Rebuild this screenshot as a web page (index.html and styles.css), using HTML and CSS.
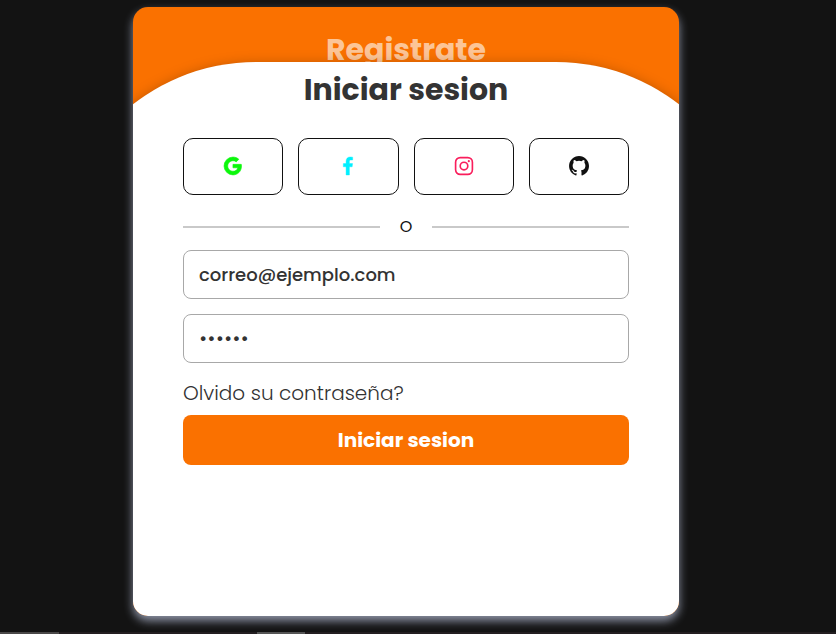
FILE: index.html
```html
<!DOCTYPE html>
<html lang="es">
<head>
<meta charset="utf-8">
<meta name="viewport" content="width=device-width, initial-scale=1">
<title>Iniciar sesion</title>
<link rel="stylesheet" href="styles.css">
</head>
<body>
<main class="card">
  <h2 class="signup-title">Registrate</h2>
  <section class="login">
    <form class="login-form">
      <h1 class="title">Iniciar sesion</h1>
      <div class="socials">
        <button type="button" class="social google" aria-label="Google">
          <svg width="24" height="24" viewBox="0 0 24 24" fill="currentColor"><path d="M20.283 10.356h-8.327v3.451h4.792c-.446 2.193-2.313 3.453-4.792 3.453a5.27 5.27 0 0 1-5.279-5.28 5.27 5.27 0 0 1 5.279-5.279c1.259 0 2.397.447 3.29 1.178l2.6-2.599c-1.584-1.381-3.615-2.233-5.89-2.233a8.908 8.908 0 0 0-8.934 8.934 8.907 8.907 0 0 0 8.934 8.934c4.467 0 8.529-3.249 8.529-8.934 0-.528-.081-1.097-.202-1.625z" stroke="currentColor" stroke-width=".6"/></svg>
        </button>
        <button type="button" class="social facebook" aria-label="Facebook">
          <svg width="24" height="24" viewBox="0 0 24 24" fill="currentColor"><path d="M13.397 20.997v-8.196h2.765l.411-3.209h-3.176V7.548c0-.926.258-1.56 1.587-1.56h1.684V3.127A22.336 22.336 0 0 0 14.201 3c-2.444 0-4.122 1.492-4.122 4.231v2.355H7.332v3.209h2.753v8.202h3.312z" stroke="currentColor" stroke-width=".4"/></svg>
        </button>
        <button type="button" class="social instagram" aria-label="Instagram">
          <svg width="24" height="24" viewBox="0 0 24 24" fill="none" stroke="currentColor" stroke-width="1.65"><rect x="3.6" y="3.6" width="16.8" height="16.8" rx="4.6"/><circle cx="12" cy="12" r="3.8"/><circle cx="16.8" cy="7.2" r="1.08" fill="currentColor" stroke="none"/></svg>
        </button>
        <button type="button" class="social github" aria-label="GitHub">
          <svg width="24" height="24" viewBox="0 0 24 24" fill="currentColor"><path fill-rule="evenodd" d="M12.026 2c-5.509 0-9.974 4.465-9.974 9.974 0 4.406 2.857 8.145 6.821 9.465.499.09.679-.217.679-.481 0-.237-.008-.865-.011-1.696-2.775.602-3.361-1.338-3.361-1.338-.452-1.152-1.107-1.459-1.107-1.459-.905-.619.069-.605.069-.605 1.002.07 1.527 1.028 1.527 1.028.89 1.524 2.336 1.084 2.902.829.091-.645.351-1.085.635-1.334-2.214-.251-4.542-1.107-4.542-4.93 0-1.087.389-1.979 1.024-2.675-.101-.253-.446-1.268.099-2.64 0 0 .837-.269 2.742 1.021a9.582 9.582 0 0 1 2.496-.336 9.554 9.554 0 0 1 2.496.336c1.906-1.291 2.742-1.021 2.742-1.021.545 1.372.203 2.387.099 2.64.64.696 1.024 1.587 1.024 2.675 0 3.833-2.33 4.675-4.552 4.922.355.308.675.916.675 1.846 0 1.334-.012 2.41-.012 2.737 0 .267.178.577.687.479C19.146 20.115 22 16.379 22 11.974 22 6.465 17.535 2 12.026 2z"/></svg>
        </button>
      </div>
      <div class="divider">O</div>
      <input class="field" type="email" aria-label="Correo" value="correo@ejemplo.com">
      <input class="field" type="password" aria-label="Contraseña" value="secret">
      <a class="forgot" href="#">Olvido su contraseña?</a>
      <button class="submit" type="button">Iniciar sesion</button>
    </form>
  </section>
</main>
</body>
</html>
```
FILE: styles.css
```css
* {
  box-sizing: border-box;
}

body {
  margin: 0;
  min-height: 100vh;
  padding: 7px 24px 18px 0;
  display: flex;
  justify-content: center;
  font-family: Poppins, Inter, sans-serif;
  color: #333;
  background:
    linear-gradient(90deg, #4a4848 59px, #231e20 59px 257px, #555 257px 305px, #231e20 305px) bottom / 100% 2px no-repeat,
    #131313;
}

.card {
  width: 100%;
  max-width: 546px;
  display: flex;
  flex-direction: column;
  overflow: hidden;
  border-radius: 15px;
  background: #fa7100;
  box-shadow: 0 5px 10px #8d93a5;
}

.signup-title {
  height: 55px;
  margin: 0;
  padding-top: 23px;
  font-size: 30px;
  line-height: 40px;
  font-weight: 700;
  text-align: center;
  color: rgba(255, 255, 255, 0.6);
}

.login {
  position: relative;
  flex: 1;
  margin: 0 -77px;
  padding: 8px 127px 0;
  border-radius: 200px 200px 0 0;
  background: #fff;
  box-shadow: 0 5px 15px rgba(0, 0, 0, 0.4);
}

.login-form {
  display: flex;
  flex-direction: column;
}

.title {
  margin: 0 0 28px;
  font-size: 30px;
  line-height: 40px;
  font-weight: 700;
  text-align: center;
}

.socials {
  display: grid;
  grid-template-columns: repeat(4, 1fr);
  gap: 15px;
}

.social {
  height: 57px;
  padding: 0 0 2px;
  display: flex;
  align-items: center;
  justify-content: center;
  border: 1px solid #111;
  border-radius: 10px;
  background: #fff;
}

.social svg {
  width: 24px;
  height: 24px;
}

.google { color: #0bf70b; }
.facebook { color: #00f0ff; }
.instagram { color: #f91e5c; }
.github { color: #111; }

.divider {
  margin: 20px 0 11px;
  display: flex;
  align-items: center;
  gap: 20px;
  font-size: 16px;
  line-height: 24px;
  color: #111;
}

.divider::before,
.divider::after {
  content: "";
  flex: 1;
  height: 2px;
  background: #c9c9c9;
}

.field {
  width: 100%;
  height: 49px;
  margin-bottom: 15px;
  padding: 0 15px;
  border: 1px solid #a8a8a8;
  border-radius: 8px;
  background: #fff;
  font-family: inherit;
  font-size: 18px;
  font-weight: 500;
  color: #333;
}

.forgot {
  align-self: flex-start;
  margin-bottom: 7px;
  font-size: 20px;
  line-height: 30px;
  font-weight: 300;
  color: #333;
  text-decoration: none;
}

.submit {
  height: 50px;
  border: 0;
  border-radius: 8px;
  background: #fa7100;
  font-family: inherit;
  font-size: 20px;
  font-weight: 700;
  color: #fff;
}
```
